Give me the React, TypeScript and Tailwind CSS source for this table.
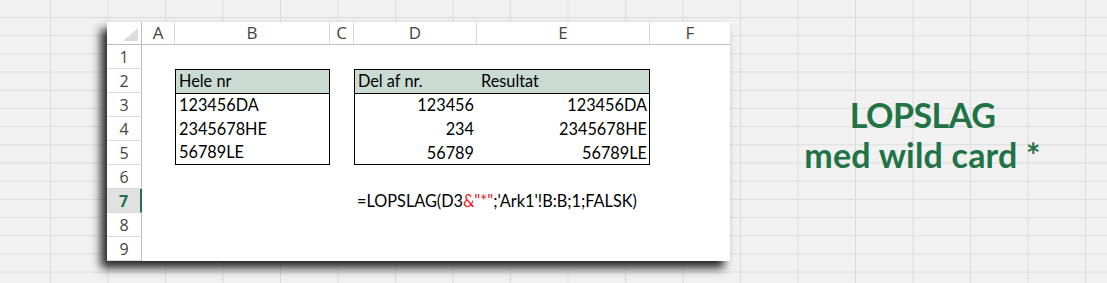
import React from "react";

const colLetters = ["A", "B", "C", "D", "E", "F"];
const rowStarts = [
  "row-start-2",
  "row-start-3",
  "row-start-4",
  "row-start-5",
  "row-start-6",
  "row-start-7",
  "row-start-8",
  "row-start-9",
  "row-start-10",
];

function RowHeader({ n, idx }: { n: number; idx: number }) {
  const active = n === 7;
  return (
    <div
      className={`col-start-1 ${rowStarts[idx]} flex items-center justify-center border-b border-[#dadada] text-[16px] ${
        active
          ? "bg-[#e1e1e1] text-[#217346] font-bold border-r-2 border-r-[#217346]"
          : "bg-white text-[#444] border-r border-r-[#bdbdbd]"
      }`}
      style={{ fontFamily: "'Open Sans', 'Noto Sans', sans-serif" }}
    >
      {n}
    </div>
  );
}

export default function App() {
  const cell = "h-[24px] flex items-end pb-[2px] leading-[20px] text-[16.3px] text-black";
  return (
    <div
      className="w-[1107px] h-[283px] flex bg-[#f1f1f1] bg-[linear-gradient(to_right,#dcdcdc_1px,transparent_1px),linear-gradient(to_bottom,#dcdcdc_1px,transparent_1px)] bg-size-[57.5px_18.2px] bg-position-[50px_17px] overflow-hidden"
      style={{ fontFamily: "Lato, 'Open Sans', sans-serif" }}
    >
      <div className="pl-[107px] pt-[22px]">
        <div className="w-[623px] h-[239px] bg-white shadow-[-6px_7px_9px_rgba(0,0,0,0.85)] grid grid-cols-[35px_33px_155px_24px_123px_173px_80px] grid-rows-[23px_repeat(9,24px)]">
          {/* corner */}
          <div className="col-start-1 row-start-1 relative border-r border-b border-[#bdbdbd] bg-white">
            <svg className="absolute right-[3px] bottom-[3px]" width="15" height="13" viewBox="0 0 15 13">
              <polygon points="15,0 15,13 0,13" fill="#dcdcdc" />
            </svg>
          </div>
          {colLetters.map((c, i) => (
            <div
              key={c}
              className={`row-start-1 flex items-center justify-center bg-white text-[17px] text-[#444] border-b border-b-[#bdbdbd] ${
                i < 5 ? "border-r border-r-[#d9d9d9]" : ""
              }`}
              style={{ fontFamily: "'Open Sans', 'Noto Sans', sans-serif" }}
            >
              {c}
            </div>
          ))}
          {[1, 2, 3, 4, 5, 6, 7, 8, 9].map((n, i) => (
            <RowHeader key={n} n={n} idx={i} />
          ))}

          {/* Table 1 */}
          <div className="col-start-3 row-start-3 row-span-4 border border-black flex flex-col">
            <div className={`${cell} h-[23px] bg-[#c9dbd2] border-b border-black pl-[3px]`}>Hele nr</div>
            <div className={`${cell} pl-[3px]`}>123456DA</div>
            <div className={`${cell} pl-[3px]`}>2345678HE</div>
            <div className={`${cell} h-[23px] pl-[3px]`}>56789LE</div>
          </div>

          {/* Table 2 */}
          <div className="col-start-5 col-span-2 row-start-3 row-span-4 border border-black grid grid-cols-[122px_172px] grid-rows-[23px_24px_24px_23px]">
            <div className={`${cell} h-[23px] bg-[#c9dbd2] border-b border-black pl-[3px]`}>Del af nr.</div>
            <div className={`${cell} h-[23px] bg-[#c9dbd2] border-b border-black pl-[4px]`}>Resultat</div>
            <div className={`${cell} justify-end pr-[3px]`}>123456</div>
            <div className={`${cell} justify-end pr-[2px]`}>123456DA</div>
            <div className={`${cell} justify-end pr-[3px]`}>234</div>
            <div className={`${cell} justify-end pr-[2px]`}>2345678HE</div>
            <div className={`${cell} h-[23px] justify-end pr-[3px]`}>56789</div>
            <div className={`${cell} h-[23px] justify-end pr-[2px]`}>56789LE</div>
          </div>

          {/* Formula */}
          <div className={`col-start-5 col-span-3 row-start-8 ${cell} pl-[3px] whitespace-nowrap`}>
            <span>=LOPSLAG(D3</span>
            <span className="text-[#e8201f]">&amp;"*"</span>
            <span>;'Ark1'!B:B;1;FALSK)</span>
          </div>
        </div>
      </div>

      <div className="flex-1 flex flex-col items-center pt-[95px] pl-[8px] text-[#217346] font-bold text-[34px] leading-[40px]">
        <div className="tracking-[-0.5px]">LOPSLAG</div>
        <div className="tracking-[0.2px]">med wild card *</div>
      </div>
    </div>
  );
}
